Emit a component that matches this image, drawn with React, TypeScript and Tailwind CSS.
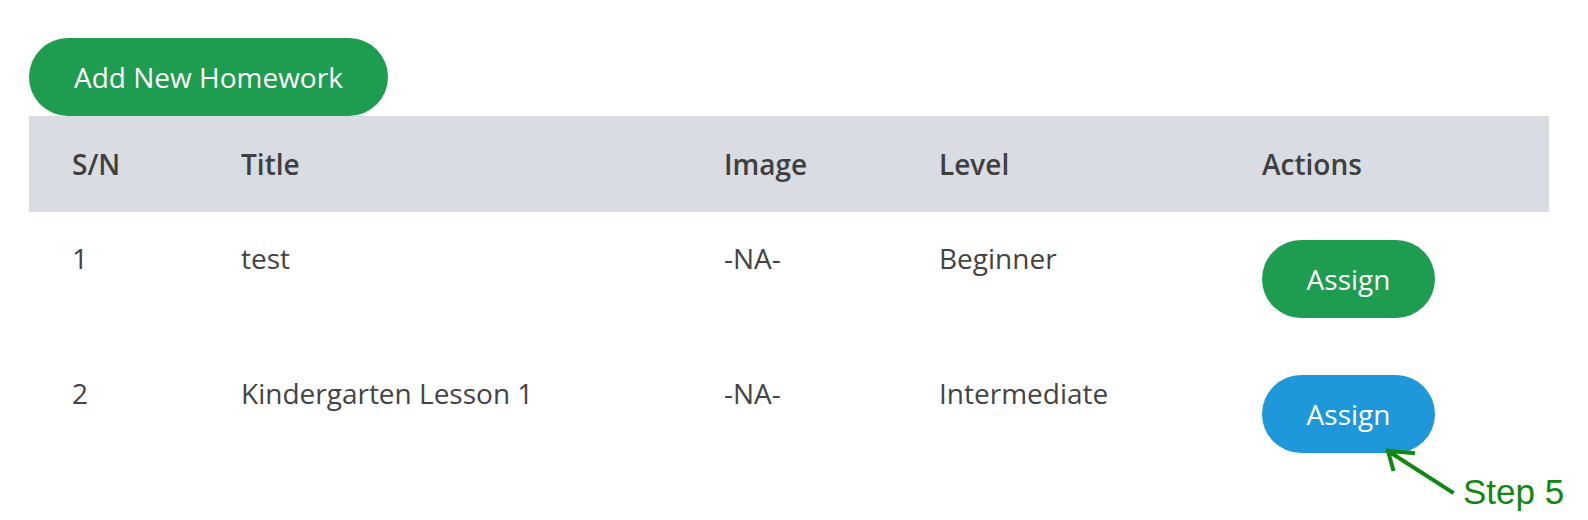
const rows = [
  { sn: 1, title: "test", image: "-NA-", level: "Beginner", tone: "green" },
  { sn: 2, title: "Kindergarten Lesson 1", image: "-NA-", level: "Intermediate", tone: "blue" },
];

const cols = "grid grid-cols-[169px_483px_215px_323px_330px]";

export default function App() {
  return (
    <div className="relative h-[520px] w-[1588px] bg-white pl-[29px] pt-[38px] text-[28px] text-[#444] [font-family:'Open_Sans',sans-serif]">
      <button className="h-[78px] rounded-full bg-[#1e9c4f] px-[45px] leading-[42px] text-white">Add New Homework</button>

      <div className="w-[1520px]">
        <div className={`${cols} h-[96px] items-center bg-[#d9dce3] font-semibold text-[#3f3f3f]`}>
          <div className="pl-[43px] leading-[42px]">S/N</div>
          <div className="pl-[43px] leading-[42px]">Title</div>
          <div className="pl-[43px] leading-[42px]">Image</div>
          <div className="pl-[43px] leading-[42px]">Level</div>
          <div className="pl-[43px] leading-[42px]">Actions</div>
        </div>
        {rows.map((r) => (
          <div key={r.sn} className={`${cols} h-[135px] items-start pt-[25px] leading-[42px]`}>
            <div className="pl-[43px]">{r.sn}</div>
            <div className="pl-[43px]">{r.title}</div>
            <div className="pl-[43px]">{r.image}</div>
            <div className="pl-[43px]">{r.level}</div>
            <div className="pl-[43px]">
              <button className={`mt-[3px] h-[78px] w-[173px] rounded-full text-white ${r.tone === "green" ? "bg-[#1e9c4f]" : "bg-[#1e98da]"}`}>Assign</button>
            </div>
          </div>
        ))}
      </div>

      {/* annotation */}
      <svg className="absolute left-0 top-0" width="1588" height="520" fill="none">
        <path d="M1452 492 L1388 451 M1388 451 L1413 453 M1388 451 L1393 469" stroke="#118811" strokeWidth="4" strokeLinecap="square" />
      </svg>
      <div className="absolute left-[1463px] top-[474px] text-[35px] leading-[35px] text-[#118811] [font-family:'Liberation_Sans',Arial,sans-serif]">Step 5</div>
    </div>
  );
}
